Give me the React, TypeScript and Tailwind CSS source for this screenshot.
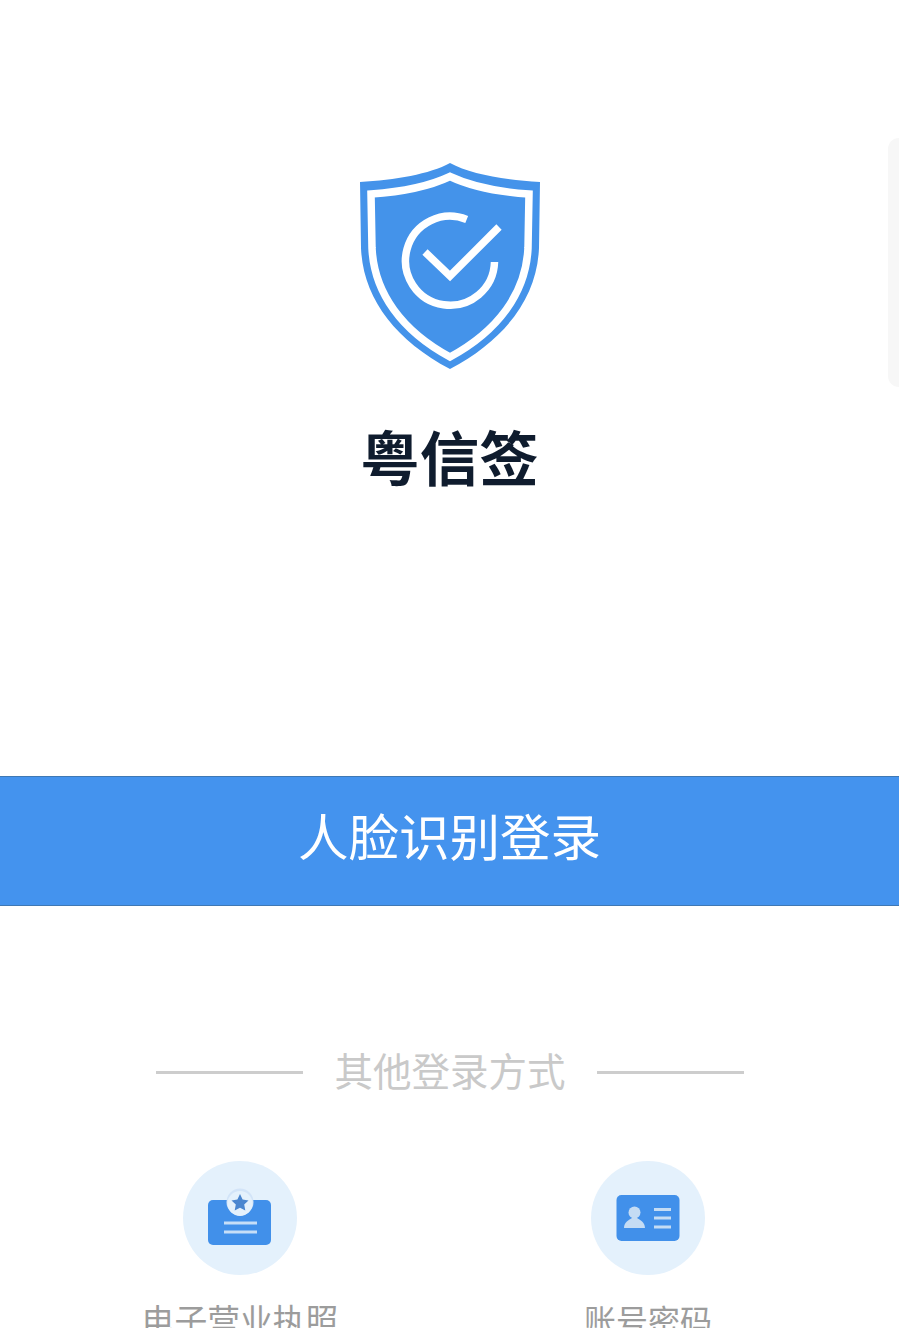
const ShieldLogo = () => (
  <svg className="shrink-0" width="180" height="206" viewBox="0 0 180 206" fill="none">
    <path
      d="M90 0C70 11 35 17 0 19L1 85C3 135 35 177 90 206C145 177 177 135 179 85L180 19C145 17 110 11 90 0Z"
      fill="#4493ea"
    />
    <path
      d="M90 13.5C70 23 40 29 11 31L12 85C14 130 42 168 90 194C138 168 166 130 168 85L169 31C140 29 110 23 90 13.5Z"
      stroke="#fff"
      strokeWidth="7.5"
    />
    <path d="M106.7 56.5A44.5 44.5 0 1 0 134.5 99" stroke="#fff" strokeWidth="7.5" />
    <path d="M65 89L90 113L139 64" stroke="#fff" strokeWidth="7.5" />
  </svg>
)

const LicenseIcon = () => (
  <svg className="shrink-0" width="114" height="114" viewBox="0 0 114 114" fill="none">
    <circle cx="57" cy="57" r="57" fill="#e4f1fc" />
    <rect x="25" y="39" width="63" height="45" rx="5" fill="#4190ea" />
    <circle cx="57" cy="41" r="13.5" fill="#d2e4f8" />
    <circle cx="57" cy="42.5" r="12.5" fill="#e4f1fc" />
    <path
      d="M57 33L59.6 38.6L65.5 39.4L61.2 43.6L62.3 49.6L57 46.7L51.7 49.6L52.8 43.6L48.5 39.4L54.4 38.6Z"
      fill="#4a86d0"
    />
    <path d="M41 62H74M41 71H74" stroke="#c6def7" strokeWidth="2.8" />
  </svg>
)

const AccountIcon = () => (
  <svg className="shrink-0" width="114" height="114" viewBox="0 0 114 114" fill="none">
    <circle cx="57" cy="57" r="57" fill="#e4f1fc" />
    <rect x="25.5" y="34" width="63" height="46" rx="5" fill="#4190ea" />
    <circle cx="43.5" cy="51.5" r="6" fill="#c4dcf4" />
    <path d="M33 67C33 61 38 59 41 57H46C49 59 54 61 54 67Z" fill="#c4dcf4" />
    <path d="M63 48.5H80M63 57H80M63 66H80" stroke="#c4dcf4" strokeWidth="2.8" />
  </svg>
)

export default function App() {
  return (
    <div
      className="relative flex h-[1328px] flex-col items-center overflow-hidden bg-white pt-[163px]"
      style={{ fontFamily: '"Noto Sans CJK SC", "Noto Sans", sans-serif' }}
    >
      <div className="absolute right-0 top-[138px] h-[249px] w-[11px] rounded-l-xl bg-[#f7f7f7]" />

      <ShieldLogo />
      <h1 className="mt-[44px] h-[84px] shrink-0 text-[59.5px] font-bold leading-[84px] text-[#0f1c2e]">粤信签</h1>

      <button className="mt-[279px] h-[130px] w-full shrink-0 border-y border-[#3f78b4] bg-[#4493ee] pb-[14px] text-[50.5px] leading-none text-white">
        人脸识别登录
      </button>

      <div className="ml-[1px] mt-[141px] flex h-[50px] w-[588px] shrink-0 items-center justify-between">
        <span className="h-[3px] w-[147px] bg-[#cdcdcd]" />
        <span className="pb-[7px] text-[38.5px] leading-[50px] text-[#c9c9c9]">其他登录方式</span>
        <span className="h-[3px] w-[147px] bg-[#cdcdcd]" />
      </div>

      <div className="mt-[64px] flex w-full shrink-0 justify-center gap-[294px] pr-[11px]">
        <div className="flex w-[114px] flex-col items-center">
          <LicenseIcon />
          <span className="mt-[20px] whitespace-nowrap text-[32.8px] leading-[48px] text-[#9c9c9c]">电子营业执照</span>
        </div>
        <div className="flex w-[114px] flex-col items-center">
          <AccountIcon />
          <span className="mt-[20px] whitespace-nowrap text-[32px] leading-[48px] text-[#9c9c9c]">账号密码</span>
        </div>
      </div>
    </div>
  )
}
